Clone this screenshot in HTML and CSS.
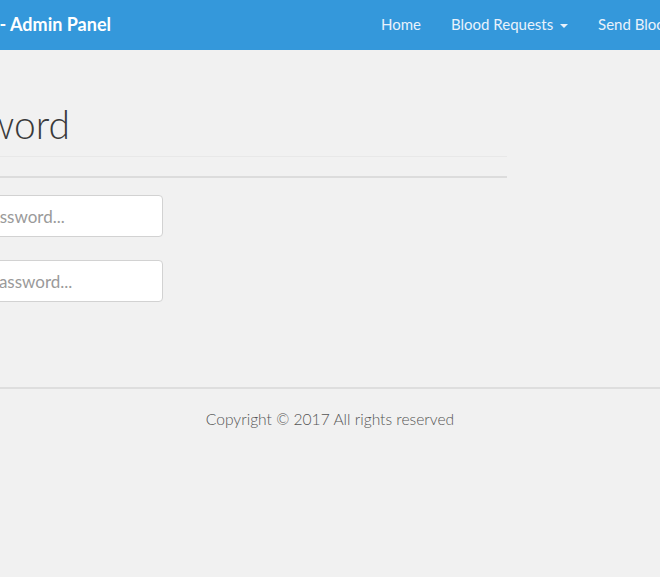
FILE: index.html
```html
<!DOCTYPE html>
<html lang="en">
<head>
<meta charset="utf-8">
<title>Change Password - Admin Panel</title>
<link rel="stylesheet" href="styles.css">
</head>
<body>
<nav class="navbar">
  <div class="brand-box"><a class="brand" href="#">Blood Bank - Admin Panel</a></div>
  <ul class="nav">
    <li><a href="#">Home</a></li>
    <li><a href="#">Blood Requests <span class="caret"></span></a></li>
    <li><a href="#">Send Blood Request</a></li>
    <li><a href="#">Logout</a></li>
  </ul>
</nav>
<main class="main">
  <div class="page-header">
    <div class="title-box"><h1 class="title">Change Password</h1></div>
  </div>
  <hr class="rule">
  <form class="form">
    <input class="field field-old" type="password" placeholder="Old Password...">
    <input class="field field-new" type="password" placeholder="New Password...">
  </form>
</main>
<footer class="footer">
  <hr class="footer-rule">
  <p class="copyright">Copyright © 2017 All rights reserved</p>
</footer>
</body>
</html>
```
FILE: styles.css
```css
html, body {
  margin: 0;
  padding: 0;
}
body {
  background: #f1f1f1;
  font-family: Lato, "Open Sans", sans-serif;
  color: #333;
  overflow: hidden;
  width: 660px;
  height: 577px;
}
.navbar {
  height: 50px;
  background: #3498db;
  display: flex;
  align-items: flex-start;
  white-space: nowrap;
  overflow: hidden;
}
.brand-box {
  flex: 0 0 111px;
  width: 111px;
  display: flex;
  justify-content: flex-end;
  padding-top: 14px;
}
.brand {
  flex: none;
  color: #ffffff;
  font-weight: 700;
  font-size: 18px;
  line-height: 21px;
  text-decoration: none;
}
.nav {
  flex: none;
  display: flex;
  list-style: none;
  margin: 0 0 0 255px;
  padding: 14px 0 0 0;
}
.nav a {
  display: block;
  padding: 0 15px;
  color: #e9f2fb;
  font-size: 15px;
  line-height: 21px;
  text-decoration: none;
}
.caret {
  display: inline-block;
  width: 0;
  height: 0;
  margin-left: 3px;
  vertical-align: middle;
  border-top: 4px solid #e9f2fb;
  border-left: 4px solid transparent;
  border-right: 4px solid transparent;
}
.main {
  padding-top: 53px;
}
.page-header {
  width: 507px;
  padding-bottom: 10px;
  border-bottom: 1px solid #e8e8e8;
}
.title-box {
  width: 70px;
  display: flex;
  justify-content: flex-end;
}
.title {
  flex: none;
  margin: 0;
  font-size: 39px;
  font-weight: 300;
  line-height: 43px;
  color: #3a3a3a;
  white-space: nowrap;
}
.rule {
  width: 507px;
  margin: 19px 0 0 0;
  border: 0;
  border-top: 2px solid #dcdcdc;
  height: 0;
}
.form {
  margin-top: 17px;
  display: flex;
  flex-direction: column;
  gap: 23px;
}
.field {
  box-sizing: border-box;
  margin-left: -63px;
  width: 226px;
  height: 42px;
  padding: 0 12px;
  border: 1px solid #d2d2d2;
  border-radius: 4px;
  background: #ffffff;
  font-family: Lato, "Open Sans", sans-serif;
  font-size: 17px;
  color: #555;
}
.field::placeholder {
  color: #9a9a9a;
}
.footer {
  margin-top: 85px;
}
.footer-rule {
  margin: 0;
  border: 0;
  border-top: 2px solid #dedede;
  height: 0;
}
.copyright {
  margin: 18px 0 0 0;
  text-align: center;
  font-size: 15.6px;
  line-height: 24px;
  font-weight: 300;
  color: #555;
}
```
